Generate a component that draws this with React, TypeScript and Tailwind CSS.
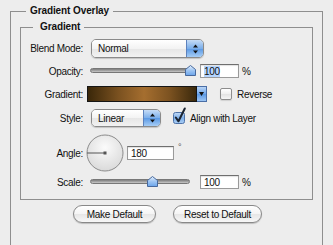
import React from 'react';

const Arrows: React.FC = () => (
  <svg width="7" height="10" viewBox="0 0 7 10">
    <path d="M3.5 0.5 L6 3.5 H1 Z" fill="#111" />
    <path d="M3.5 9.5 L6 6.5 H1 Z" fill="#111" />
  </svg>
);

const Select: React.FC<{ value: string; className: string }> = ({ value, className }) => (
  <div
    className={`flex overflow-hidden rounded-[5px] border border-[#8a8a8a] shadow-[0_1px_1px_rgba(0,0,0,0.18)] ${className}`}
  >
    <div className="flex flex-1 items-center bg-[linear-gradient(to_bottom,#ffffff,#f3f3f3_50%,#e6e6e6_51%,#f2f2f2)] pl-[6px]">
      {value}
    </div>
    <div className="flex w-[17px] items-center justify-center border-l border-[#5d82bd] bg-[linear-gradient(to_bottom,#c6dcf6,#7aaeea_50%,#5a98e4_51%,#a6cdf5)]">
      <Arrows />
    </div>
  </div>
);

const Thumb: React.FC = () => (
  <svg width="11" height="11" viewBox="0 0 11 11">
    <defs>
      <linearGradient id="thumbFill" x1="0" y1="0" x2="0" y2="1">
        <stop offset="0" stopColor="#e4f0fd" />
        <stop offset="0.5" stopColor="#9ec5f3" />
        <stop offset="1" stopColor="#6aa4ea" />
      </linearGradient>
    </defs>
    <path d="M5.5 0.5 L10.5 4.5 V10.5 H0.5 V4.5 Z" fill="url(#thumbFill)" stroke="#47689c" />
  </svg>
);

const Slider: React.FC<{ left: number }> = ({ left }) => (
  <div className="relative h-[14px] w-[110px]">
    <div className="absolute left-0 top-[4px] h-[5px] w-[100px] rounded-full border border-[#777] bg-[linear-gradient(to_bottom,#7d7d7d,#a8a8a8_60%,#c9c9c9)]" />
    <div className="absolute top-[1px]" style={{ left }}>
      <Thumb />
    </div>
  </div>
);

const TextBox: React.FC<{ value: string; className: string; selected?: boolean }> = ({ value, className, selected }) => (
  <div
    className={`flex items-center border border-[#9a9a9a] border-t-[#6f6f6f] bg-white pl-[3px] shadow-[inset_0_1px_1px_rgba(0,0,0,0.12)] ${className}`}
  >
    <span className={selected ? 'bg-[#b5d5ff] leading-[11px]' : 'leading-[11px]'}>{value}</span>
  </div>
);

const Checkbox: React.FC<{ checked?: boolean }> = ({ checked }) =>
  checked ? (
    <div className="relative h-[12px] w-[12px]">
      <svg width="16" height="18" viewBox="0 0 16 18" className="absolute left-0 top-[-5px] overflow-visible">
        <defs>
          <linearGradient id="cbBlue" x1="0" y1="0" x2="0" y2="1">
            <stop offset="0" stopColor="#c2daf6" />
            <stop offset="0.5" stopColor="#7eb0ea" />
            <stop offset="1" stopColor="#a9cdf4" />
          </linearGradient>
        </defs>
        <rect x="0.5" y="5.5" width="11" height="11" rx="2" fill="url(#cbBlue)" stroke="#4f73a8" />
        <path d="M2.8 10.5 L5.5 14.3 L11.8 1.5" fill="none" stroke="#1b2431" strokeWidth="2" strokeLinecap="round" strokeLinejoin="round" />
      </svg>
    </div>
  ) : (
    <div className="h-[12px] w-[12px] rounded-[2px] border border-[#8d8d8d] bg-[linear-gradient(to_bottom,#ffffff,#efefef_50%,#e3e3e3_51%,#f5f5f5)] shadow-[0_1px_1px_rgba(0,0,0,0.12)]" />
  );

const Dial: React.FC = () => (
  <svg width="38" height="38" viewBox="0 0 38 38">
    <defs>
      <radialGradient id="dialFill" cx="0.5" cy="0.35" r="0.65">
        <stop offset="0" stopColor="#fbfbfb" />
        <stop offset="1" stopColor="#dadada" />
      </radialGradient>
    </defs>
    <circle cx="19" cy="19" r="18" fill="url(#dialFill)" stroke="#8c8c8c" />
    <line x1="1" y1="19" x2="19" y2="19" stroke="#555" strokeWidth="1" />
    <rect x="17.5" y="17.5" width="3" height="3" fill="#555" />
  </svg>
);

const Label: React.FC<{ children: React.ReactNode }> = ({ children }) => (
  <div className="w-[62px] shrink-0 text-right">{children}</div>
);

const PillButton: React.FC<{ label: string; className: string }> = ({ label, className }) => (
  <div
    className={`flex h-[18px] items-center justify-center rounded-full border border-[#888] bg-[linear-gradient(to_bottom,#ffffff,#f4f4f4_50%,#e6e6e6_51%,#f7f7f7)] shadow-[0_1px_1px_rgba(0,0,0,0.2)] ${className}`}
  >
    {label}
  </div>
);

const App: React.FC = () => {
  return (
    <div className="h-[245px] w-[333px] overflow-hidden bg-[#ededed] font-['Liberation_Sans',Arial,sans-serif] text-[10px] tracking-[-0.3px] text-[#111]">
      <fieldset className="ml-[10px] mt-[4px] h-[300px] w-[313px] border border-[#8e8e8e] p-0">
        <legend className="ml-[15px] px-[4px] text-[10px] font-bold leading-[14px] tracking-[-0.1px]">Gradient Overlay</legend>

        {/* Gradient group */}
        <fieldset className="ml-[9px] mt-[2px] w-[293px] border border-[#8e8e8e] p-0 pb-[10px]">
          <legend className="ml-[12px] pl-[7px] pr-[4px] text-[10px] font-bold leading-[14px] tracking-[-0.1px]">Gradient</legend>

          <div className="mt-[5px] flex h-[19px] items-center">
            <Label>Blend Mode:</Label>
            <Select value="Normal" className="ml-[8px] h-[19px] w-[113px]" />
          </div>

          <div className="mt-[6px] flex h-[14px] items-center">
            <Label>Opacity:</Label>
            <div className="ml-[7px]">
              <Slider left={95} />
            </div>
            <TextBox value="100" selected className="h-[14px] w-[39px]" />
            <span className="ml-[3px]">%</span>
          </div>

          <div className="mt-[8px] flex h-[16px] items-center">
            <Label>Gradient:</Label>
            <div className="ml-[4px] flex h-[16px]">
              <div className="h-[16px] w-[110px] border border-[#151515] bg-[linear-gradient(to_right,#3a2709,#7a5120_28%,#a56e2f_52%,#7d5321_75%,#3b290c)]" />
              <div className="flex h-[16px] w-[10px] items-center justify-center border border-l-0 border-[#4a6ea6] bg-[linear-gradient(to_bottom,#b9d4f5,#6ea6ea_50%,#5a98e4_51%,#9cc5f3)]">
                <svg width="5" height="4" viewBox="0 0 5 4">
                  <path d="M0 0 H5 L2.5 4 Z" fill="#111" />
                </svg>
              </div>
            </div>
            <div className="ml-[13px]">
              <Checkbox />
            </div>
            <span className="ml-[5px]">Reverse</span>
          </div>

          <div className="mt-[7px] flex h-[18px] items-center">
            <Label>Style:</Label>
            <Select value="Linear" className="ml-[8px] h-[18px] w-[70px]" />
            <div className="ml-[12px]">
              <Checkbox checked />
            </div>
            <span className="ml-[5px]">Align with Layer</span>
          </div>

          <div className="mt-[7px] flex h-[38px] items-center">
            <Label>Angle:</Label>
            <div className="ml-[3px]">
              <Dial />
            </div>
            <TextBox value="180" className="ml-[3px] h-[14px] w-[47px]" />
            <span className="mb-[10px] ml-[4px] text-[9px] text-[#555]">°</span>
          </div>

          <div className="mt-[3px] flex h-[14px] items-center">
            <Label>Scale:</Label>
            <div className="ml-[7px]">
              <Slider left={57} />
            </div>
            <TextBox value="100" className="h-[14px] w-[39px]" />
            <span className="ml-[3px]">%</span>
          </div>
        </fieldset>

        <div className="ml-[62px] mt-[5px] flex gap-[17px]">
          <PillButton label="Make Default" className="w-[83px]" />
          <PillButton label="Reset to Default" className="w-[89px]" />
        </div>
      </fieldset>
    </div>
  );
};

export default App;
